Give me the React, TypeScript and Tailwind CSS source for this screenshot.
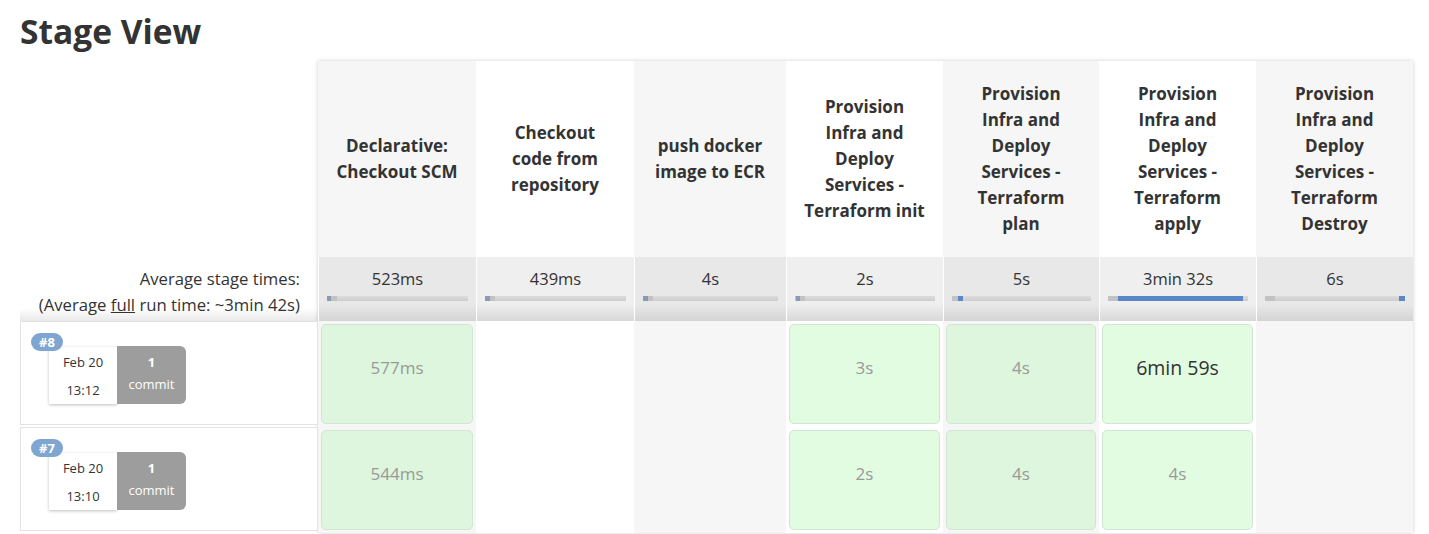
type Cell = { value: string; big?: boolean } | null;

interface Stage {
  lines: string[];
  avg: string;
  width: string;
  odd: boolean;
  bar: { left: number; width: number; blue: boolean };
}

const stages: Stage[] = [
  { lines: ['Declarative:', 'Checkout SCM'], avg: '523ms', width: 'w-[158px]', odd: true, bar: { left: 0, width: 4, blue: false } },
  { lines: ['Checkout', 'code from', 'repository'], avg: '439ms', width: 'w-[158px]', odd: false, bar: { left: 0, width: 5, blue: false } },
  { lines: ['push docker', 'image to ECR'], avg: '4s', width: 'w-[152px]', odd: true, bar: { left: 0, width: 5, blue: false } },
  { lines: ['Provision', 'Infra and', 'Deploy', 'Services -', 'Terraform init'], avg: '2s', width: 'w-[157px]', odd: false, bar: { left: 1, width: 4, blue: false } },
  { lines: ['Provision', 'Infra and', 'Deploy', 'Services -', 'Terraform', 'plan'], avg: '5s', width: 'w-[156px]', odd: true, bar: { left: 6, width: 5, blue: true } },
  { lines: ['Provision', 'Infra and', 'Deploy', 'Services -', 'Terraform', 'apply'], avg: '3min 32s', width: 'w-[157px]', odd: false, bar: { left: 10, width: 125, blue: true } },
  { lines: ['Provision', 'Infra and', 'Deploy', 'Services -', 'Terraform', 'Destroy'], avg: '6s', width: 'w-[157px]', odd: true, bar: { left: 134, width: 6, blue: true } },
];

const builds: { id: string; date: string; time: string; cells: Cell[] }[] = [
  {
    id: '#8',
    date: 'Feb 20',
    time: '13:12',
    cells: [{ value: '577ms' }, null, null, { value: '3s' }, { value: '4s' }, { value: '6min 59s', big: true }, null],
  },
  {
    id: '#7',
    date: 'Feb 20',
    time: '13:10',
    cells: [{ value: '544ms' }, null, null, { value: '2s' }, { value: '4s' }, { value: '4s' }, null],
  },
];

function BuildInfo({ id, date, time }: { id: string; date: string; time: string }) {
  return (
    <div className="h-[106px] pb-[2px]">
      <div className="relative h-[104px] border border-[#e3e3e3] bg-white">
        {/* build number badge */}
        <div className="absolute left-[10px] top-[11px] z-10 flex h-[18px] w-[32px] items-center justify-center rounded-full bg-[#7ea6d1] text-[13px] font-bold leading-none text-white">
          {id}
        </div>
        <div className="ml-[28px] mt-[24px] flex items-start">
          <div className="mt-[1px] flex h-[57px] w-[68px] flex-col items-center bg-white pt-[1px] text-[13px] leading-[28px] text-[#333] shadow-[0_1px_3px_rgba(0,0,0,0.25)]">
            <span>{date}</span>
            <span>{time}</span>
          </div>
          <div className="flex h-[58px] w-[69px] flex-col items-center rounded-r-[6px] bg-[#9d9d9d] pt-[5px] text-[13px] leading-[22px] text-white">
            <span className="font-bold">1</span>
            <span>commit</span>
          </div>
        </div>
      </div>
    </div>
  );
}

function StageColumn({ stage, index }: { stage: Stage; index: number }) {
  return (
    <div className={`${stage.width} flex shrink-0 flex-col ${stage.odd ? 'bg-[#f6f6f6]' : 'bg-white'}`}>
      <div className="flex h-[196px] flex-col items-center justify-center whitespace-nowrap text-center text-[17px] font-bold leading-[26px] text-[#333]">
        {stage.lines.map((l) => (
          <span key={l}>{l}</span>
        ))}
      </div>

      <div
        className={`h-[64px] border-l border-white pt-[9px] ${
          stage.odd
            ? 'bg-[linear-gradient(to_bottom,#e8e8e8_0%,#e8e8e8_74%,#d4d4d4_100%)]'
            : 'bg-[linear-gradient(to_bottom,#efefef_0%,#efefef_74%,#d8d8d8_100%)]'
        }`}
      >
        <div className="text-center text-[16.5px] leading-[26px] text-[#333]">{stage.avg}</div>
        <div className="relative mx-2 mt-[4px] h-[5px] overflow-hidden bg-[linear-gradient(to_bottom,#dcdcdc,#cdcdcd)]">
          <div className="absolute left-0 top-0 h-full w-[10px] bg-[#c2c2c2]" />
          <div
            className={`absolute top-0 h-full ${stage.bar.blue ? 'bg-[#5a87c9]' : 'bg-[#8a99b6]'}`}
            style={{ left: stage.bar.left, width: stage.bar.width }}
          />
        </div>
      </div>

      {builds.map((b) => {
        const cell = b.cells[index];
        return (
          <div key={b.id} className="h-[106px] p-[3px]">
            {cell && (
              <div
                className={`h-full rounded-[5px] border border-[#d2e4d2] ${
                  stage.odd ? 'bg-[#ddf6dd]' : 'bg-[#e2fce2]'
                }`}
              >
                <div
                  className={`mt-[31px] flex h-6 items-center justify-center ${
                    cell.big ? 'text-[19.5px] text-[#333]' : 'text-[17px] text-[#999]'
                  }`}
                >
                  {cell.value}
                </div>
              </div>
            )}
          </div>
        );
      })}
    </div>
  );
}

export default function App() {
  return (
    <div className="min-h-[534px] bg-white pl-5 pt-[14px] font-['Open_Sans',sans-serif] text-[#333]">
      <h1 className="mb-[13px] h-[34px] text-[33.5px] font-bold leading-[34px]">Stage View</h1>

      <div className="flex">
        <div className="w-[298px] shrink-0">
          <div className="h-[196px]" />
          <div className="h-[64px] bg-[linear-gradient(to_bottom,#fff_0%,#fff_80%,#e9e9e9_100%)] pr-[18px] pt-[9px] text-right text-[16.7px] leading-[26px]">
            <div>Average stage times:</div>
            <div>
              (Average <span className="underline">full</span> run time: ~3min 42s)
            </div>
          </div>
          {builds.map((b) => (
            <BuildInfo key={b.id} id={b.id} date={b.date} time={b.time} />
          ))}
        </div>

        <div className="flex shrink-0 shadow-[0_0_4px_rgba(0,0,0,0.2)]">
          {stages.map((s, i) => (
            <StageColumn key={i} stage={s} index={i} />
          ))}
        </div>
      </div>
    </div>
  );
}
